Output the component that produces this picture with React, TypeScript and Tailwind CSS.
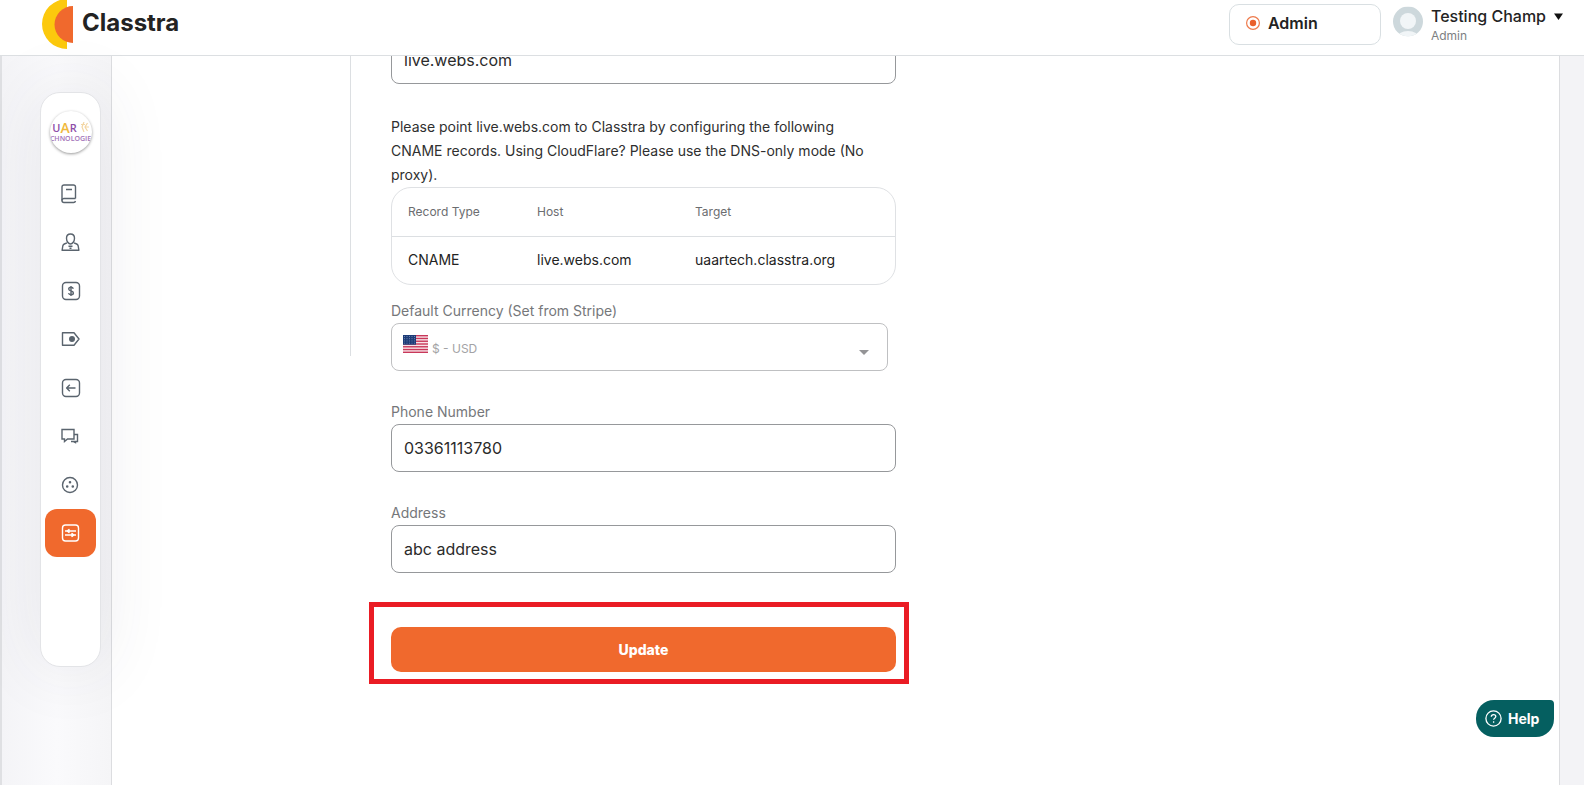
import React, { useState } from 'react';

type IconProps = { children: React.ReactNode };

const NavIcon: React.FC<IconProps> = ({ children }) => (
  <svg width="20" height="20" viewBox="0 0 20 20" fill="none" stroke="currentColor" strokeWidth="1.4" strokeLinejoin="round">
    {children}
  </svg>
);

const navItems = [
  {
    label: 'Courses',
    icon: (
      <>
        <path d="M14.500 14.500V3a2 2 0 0 0-2-2H3a2 2 0 0 0-2 2v13.500a2 2 0 0 0 2 2h9.500a2 2 0 0 0 2-1.500" />
        <path d="M1 16.500a2 2 0 0 1 2-2h11.500M5 5.500h6" />
      </>
    ),
  },
  {
    label: 'People',
    icon: (
      <>
        <path d="M9.500 2c-2.300 0-4 1.700-4 4.300 0 3 2 5.700 4 5.700s4-2.700 4-5.700c0-2.600-1.700-4.300-4-4.300Z" />
        <path d="M6 10.800 3.300 12c-1 .5-1.300 1.100-1.500 2L1.100 18.300h16.800L17.200 14c-.2-.9-.5-1.500-1.500-2L13 10.800" />
        <path d="M7.500 14.200h4M8.500 16.200h2" />
      </>
    ),
  },
  {
    label: 'Payments',
    icon: (
      <>
        <rect x="1.500" y="1.500" width="17" height="17" rx="3.500" />
        <path d="M12.300 7.800c-.3-1-1.100-1.500-2.300-1.500-1.400 0-2.300.7-2.300 1.800 0 2.600 4.700 1.200 4.700 3.800 0 1.100-1 1.800-2.400 1.800-1.300 0-2.200-.6-2.500-1.600M10 5v10" />
      </>
    ),
  },
  {
    label: 'Tags',
    icon: (
      <>
        <path d="M1.500 3.800h11.500l5 6.200-5 6.200H1.500Z" />
        <circle cx="11" cy="10" r="2.300" fill="currentColor" />
      </>
    ),
  },
  {
    label: 'Back',
    icon: (
      <>
        <rect x="1.500" y="1.500" width="17" height="17" rx="3.500" />
        <path d="M14.500 10H6M8.800 6.800 5.600 10l3.200 3.200" />
      </>
    ),
  },
  {
    label: 'Messages',
    icon: (
      <g strokeLinejoin="miter">
        <path d="M1 3.500h12v9.500H6.500l-3 2.500V13H1Z" />
        <path d="M13 8.500h3.500v7H10M14.500 15.500v1l-2-1" />
      </g>
    ),
  },
  {
    label: 'Community',
    icon: (
      <>
        <circle cx="9" cy="10" r="7.500" />
        <circle cx="9" cy="7.300" r="0.600" fill="currentColor" />
        <circle cx="6.200" cy="11.500" r="0.600" fill="currentColor" />
        <circle cx="11.800" cy="11.500" r="0.600" fill="currentColor" />
      </>
    ),
  },
  {
    label: 'Settings',
    icon: (
      <>
        <rect x="1.500" y="2" width="16" height="16" rx="3" />
        <path d="M4 8h11M4 12h11" />
        <path d="M8 6.500v3L6.200 8ZM11 10.500v3l1.800-1.500Z" fill="currentColor" />
      </>
    ),
  },
];

const Logo: React.FC = () => (
  <svg width="32" height="49" viewBox="0 0 32 49">
    <path d="M25 -1a25 25 0 0 0 0 50Z" fill="#fcc90d" />
    <path d="M31 6a18.500 18.500 0 0 0 0 37Z" fill="#f0692d" />
  </svg>
);

const SchoolLogo: React.FC = () => (
  <div className="flex size-[42px] flex-col items-center justify-center overflow-hidden rounded-full bg-white font-['Open_Sans',sans-serif] shadow-[0_1px_3px_rgba(0,0,0,0.4)]">
    <div className="flex items-center text-[11px] leading-[13px] font-semibold text-[#8e4fa8]">
      U<span className="text-[14px] text-[#f0b93c]">A</span>R
      <svg className="ml-1" width="8" height="10" viewBox="0 0 8 10" fill="none" stroke="#f3d6a4" strokeWidth="1.2">
        <path d="M3 0 1 5l2 5M6.500 1 4 5l2.500 4M0 2.500h4M4 5h4" />
      </svg>
    </div>
    <div className="text-[7px] leading-[10px] font-semibold whitespace-nowrap text-[#a272b8]">CHNOLOGIE</div>
  </div>
);

const stripes = [0, 1, 2, 3, 4, 5, 6];

const Flag: React.FC = () => (
  <svg width="25" height="18" viewBox="0 0 25 18">
    <rect width="25" height="18" fill="#f8e4e8" />
    {stripes.map((row) => (
      <rect key={row} y={row * 2.77} width="25" height="1.385" fill="#c8385a" />
    ))}
    <rect width="13" height="9.7" fill="#1d3c78" />
    {[1.5, 3.7, 5.9, 8.1].map((y) =>
      [1.5, 4, 6.5, 9, 11.5].map((x) => <circle key={`${x}-${y}`} cx={x} cy={y} r="0.45" fill="#c5d0e6" />)
    )}
  </svg>
);

const Header: React.FC = () => (
  <header className="flex h-14 shrink-0 items-start justify-between border-b border-[#dcdfe2] bg-white pr-[21px] pl-[42px]">
    <a href="#" className="flex items-center gap-2">
      <Logo />
      <span className="pb-1 text-2xl leading-10 font-bold text-[#232323]">Classtra</span>
    </a>
    <div className="flex items-start gap-3 pt-1">
      <button className="flex h-[41px] w-[152px] items-center gap-2 rounded-[10px] border border-[#d9dfe2] bg-white px-4 pb-1 text-base font-semibold text-[#232323]">
        <svg width="14" height="14" viewBox="0 0 14 14">
          <circle cx="7" cy="7" r="6.400" fill="none" stroke="#ee7a4b" strokeWidth="1.200" />
          <circle cx="7" cy="7" r="3.200" fill="#e9602b" />
        </svg>
        Admin
      </button>
      <button className="flex items-start gap-2 text-left">
        <svg className="mt-0.5" width="30" height="31" viewBox="0 0 30 30">
          <clipPath id="avatar"><circle cx="15" cy="15" r="15" /></clipPath>
          <g clipPath="url(#avatar)">
            <rect width="30" height="30" fill="#cdd8dc" />
            <circle cx="15" cy="14.500" r="8" fill="#f1f5f7" />
            <ellipse cx="15" cy="31" rx="11" ry="6.500" fill="#f1f5f7" />
          </g>
        </svg>
        <span className="flex flex-col">
          <span className="flex items-center gap-2 text-base leading-6 font-medium text-[#232323]">
            Testing Champ
            <svg width="9" height="7" viewBox="0 0 9 7"><path d="M0 0.500h9L4.500 7Z" fill="#111" /></svg>
          </span>
          <span className="text-xs leading-4 text-[#7d7f82]">Admin</span>
        </span>
      </button>
    </div>
  </header>
);

const Sidebar: React.FC = () => (
  <aside className="relative z-10 flex w-28 shrink-0 items-start border-r border-l-2 border-r-[#dcdde0] border-l-[#dfe0e3] bg-linear-to-r from-[#f4f4f7] via-[#fafafc] to-[#f5f5f7] pt-9 pl-[38px]">
    <div className="flex h-[575px] w-[61px] flex-col items-center rounded-[20px] border border-[#e3e4e7] bg-white pt-[18px] shadow-[0_0_70px_rgba(60,60,80,0.1)]">
      <SchoolLogo />
      <nav className="mt-[17px] flex h-[387px] flex-col justify-between">
        {navItems.map((item) => (
          <a
            key={item.label}
            href="#"
            aria-label={item.label}
            className={`flex h-12 w-[51px] items-center justify-center rounded-xl ${
              item.label === 'Settings' ? 'bg-[#f0692d] text-white' : 'text-[#5a646e]'
            }`}
          >
            <NavIcon>{item.icon}</NavIcon>
          </a>
        ))}
      </nav>
    </div>
  </aside>
);

const inputClass = 'h-12 w-full rounded-lg border border-[#96989b] bg-white px-3 text-base text-[#2b2b2b]';

type FieldProps = {
  id: string;
  label: string;
  value: string;
  onChange: (value: string) => void;
};

const TextField: React.FC<FieldProps> = ({ id, label, value, onChange }) => (
  <div className="flex flex-col">
    <label htmlFor={id} className="text-sm leading-6 text-[#75777a]">{label}</label>
    <input id={id} value={value} onChange={(e) => onChange(e.target.value)} className={inputClass} />
  </div>
);

const SettingsForm: React.FC = () => {
  const [domain, setDomain] = useState('live.webs.com');
  const [phone, setPhone] = useState('03361113780');
  const [address, setAddress] = useState('abc address');

  return (
    <form className="-mt-5 w-[505px]" onSubmit={(e) => e.preventDefault()}>
      <input aria-label="Domain" value={domain} onChange={(e) => setDomain(e.target.value)} className={inputClass} />

      <p className="mt-[31px] pr-5 text-sm leading-6 text-[#2f2f2f]">
        Please point live.webs.com to Classtra by configuring the following CNAME records. Using CloudFlare? Please use
        the DNS-only mode (No proxy).
      </p>

      {/* DNS records */}
      <div className="rounded-[20px] border border-[#dfe1e4]">
        <table className="w-full table-fixed text-left">
          <thead>
            <tr className="h-12 border-b border-[#dcdfe2] text-xs text-[#6b6d70]">
              <th className="w-[137px] pl-4 font-normal">Record Type</th>
              <th className="w-[158px] pl-2 font-normal">Host</th>
              <th className="pl-2 font-normal">Target</th>
            </tr>
          </thead>
          <tbody>
            <tr className="h-12 text-sm text-[#232323]">
              <td className="pl-4">CNAME</td>
              <td className="pl-2">live.webs.com</td>
              <td className="pl-2">uaartech.classtra.org</td>
            </tr>
          </tbody>
        </table>
      </div>

      <div className="mt-[14px] flex flex-col">
        <label htmlFor="currency" className="text-sm leading-6 text-[#75777a]">Default Currency (Set from Stripe)</label>
        <div className="relative mr-2">
          <select
            id="currency"
            disabled
            className="h-12 w-full appearance-none rounded-lg border border-[#bfc0c2] bg-white pt-1 pl-10 text-xs text-[#a3a3a5] opacity-100"
          >
            <option>$ - USD</option>
          </select>
          <span className="pointer-events-none absolute top-3 left-3"><Flag /></span>
          <svg className="pointer-events-none absolute top-[27px] right-[19px]" width="10" height="5" viewBox="0 0 10 5">
            <path d="M0 0h10L5 5Z" fill="#949496" />
          </svg>
        </div>
      </div>

      <div className="mt-[29px] flex flex-col gap-[29px]">
        <TextField id="phone" label="Phone Number" value={phone} onChange={setPhone} />
        <TextField id="address" label="Address" value={address} onChange={setAddress} />
      </div>

      <div className="relative mt-[54px]">
        <button type="submit" className="h-[45px] w-full rounded-[10px] bg-[#f0692d] text-sm font-extrabold text-white">
          Update
        </button>
        {/* Highlight frame */}
        <span className="pointer-events-none absolute -top-[25px] -right-[13px] -bottom-3 -left-[22px] border-5 border-[#ea1c24]" />
      </div>
    </form>
  );
};

const App: React.FC = () => {
  return (
    <div className="flex h-screen flex-col overflow-hidden bg-[#f3f3f6] font-[Inter,sans-serif]">
      <Header />
      <div className="flex min-h-0 flex-1">
        <Sidebar />
        <main className="mr-6 flex flex-1 items-start overflow-hidden border-r border-[#dcdde0] bg-white">
          <div className="h-[300px] w-[239px] border-r border-[#dcdfe2]" />
          <div className="pl-10">
            <SettingsForm />
          </div>
        </main>
      </div>
      <button className="fixed right-[30px] bottom-12 flex h-[37px] w-[78px] items-center gap-1.5 rounded-[18px] rounded-tr-sm bg-[#055f60] pl-[9px] text-sm font-bold text-white">
        <svg width="17" height="17" viewBox="0 0 17 17" fill="none" stroke="currentColor" strokeWidth="1.300">
          <circle cx="8.500" cy="8.500" r="7.600" />
          <path d="M6.300 6.800c0-1.300 1-2.200 2.300-2.200s2.200.9 2.200 2c0 1.500-2.200 1.700-2.200 3.200M8.600 11.300v1.400" />
        </svg>
        Help
      </button>
    </div>
  );
};

export default App;
